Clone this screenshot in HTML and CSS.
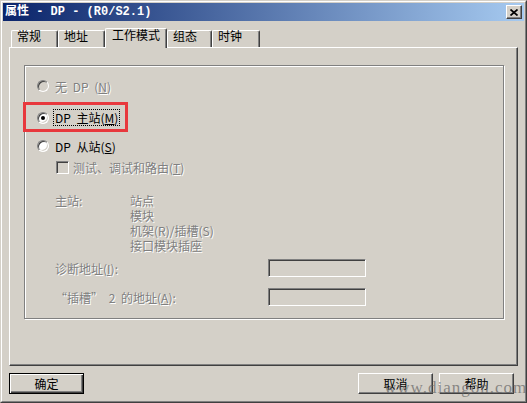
FILE: index.html
```html
<!DOCTYPE html>
<html lang="zh-CN">
<head>
    <meta charset="UTF-8">
    <title>属性 - DP - (R0/S2.1)</title>
    <link rel="stylesheet" href="styles.css">
</head>
<body>

<div class="window">
    <div class="frame">
        <div class="titlebar">
            <span class="title">属性 - DP - (R0/S2.1)</span>
            <span class="close-btn">
                <svg width="8" height="7" viewBox="0 0 8 7"><path d="M0.5 0.5L7.5 6.5M7.5 0.5L0.5 6.5" stroke="#000" stroke-width="1.7" fill="none"/></svg>
            </span>
        </div>

        <div class="content">
            <!-- 选项卡 -->
            <div class="tabs">
                <div class="tab tab-general">常规</div>
                <div class="tab tab-address">地址</div>
                <div class="tab tab-mode active">工作模式</div>
                <div class="tab tab-config">组态</div>
                <div class="tab tab-clock">时钟</div>
            </div>

            <div class="panel">
                <div class="group">
                    <div class="opt">
                        <span class="radio off"></span>
                        <span class="lbl disabled">无 DP (<u>N</u>)</span>
                    </div>
                    <div class="opt opt-master">
                        <span class="radio on"></span>
                        <span class="lbl focus">DP 主站(<u>M</u>)</span>
                        <span class="mark"></span>
                    </div>
                    <div class="opt opt-slave">
                        <span class="radio"></span>
                        <span class="lbl">DP 从站(<u>S</u>)</span>
                    </div>
                    <div class="opt opt-check">
                        <span class="check"></span>
                        <span class="disabled">测试、调试和路由(<u>T</u>)</span>
                    </div>

                    <div class="info disabled">
                        <span>主站:</span>
                        <div>
                            <div>站点</div>
                            <div>模块</div>
                            <div>机架(R)/插槽(S)</div>
                            <div>接口模块插座</div>
                        </div>
                    </div>

                    <div class="field">
                        <span class="field-label disabled">诊断地址(<u>I</u>):</span>
                        <span class="input"></span>
                    </div>
                    <div class="field field-slot">
                        <span class="field-label disabled">“插槽” 2 的地址(<u>A</u>):</span>
                        <span class="input"></span>
                    </div>
                </div>
            </div>

            <div class="buttons">
                <button class="btn default">确定</button>
                <button class="btn cancel">取消</button>
                <button class="btn">帮助</button>
            </div>
        </div>
    </div>
    <div class="watermark">www.diangon.com</div>
</div>

</body>
</html>
```

FILE: styles.css
```css
* {
    box-sizing: border-box;
}
body {
    margin: 0;
    background-color: #d4d0c8;
    font-family: "Liberation Mono", "Noto Sans CJK SC", monospace;
    font-size: 12px;
    color: #000;
}
.window {
    position: relative;
    width: 527px;
    height: 403px;
    border: 1px solid;
    border-color: #d4d0c8 #404040 #404040 #d4d0c8;
    background-color: #d4d0c8;
}
.frame {
    height: 100%;
    border: 1px solid;
    border-color: #fff #808080 #808080 #fff;
    padding: 1px;
    display: flex;
    flex-direction: column;
}
.titlebar {
    height: 18px;
    display: flex;
    align-items: center;
    justify-content: space-between;
    padding: 0 2px;
    background: linear-gradient(to right, #0a246a, #a6caf0);
    color: #fff;
    font-weight: bold;
}
.title {
    line-height: 18px;
}
.close-btn {
    width: 16px;
    height: 14px;
    display: flex;
    align-items: center;
    justify-content: center;
    background-color: #d4d0c8;
    border: 1px solid;
    border-color: #fff #404040 #404040 #fff;
    box-shadow: inset -1px -1px #808080;
}
.content {
    flex: 1;
    padding: 7px 6px 6px 6px;
    display: flex;
    flex-direction: column;
}

/* 选项卡 */
.tabs {
    display: flex;
    align-items: flex-end;
    height: 19px;
    padding-left: 2px;
}
.tab {
    height: 17px;
    line-height: 15px;
    padding-left: 5px;
    border-top: 1px solid #fff;
    border-left: 1px solid #fff;
    border-right: 1px solid #404040;
    box-shadow: inset -1px 0 #808080;
    border-radius: 2px 2px 0 0;
}
.tab-general { width: 47px; }
.tab-address { width: 47px; }
.tab-mode { width: 62px; }
.tab-config { width: 45px; }
.tab-clock { width: 48px; }
.tab.active {
    position: relative;
    z-index: 1;
    height: 20px;
    margin-bottom: -1px;
    line-height: 17px;
    padding-left: 6px;
    background-color: #d4d0c8;
}

.panel {
    height: 319px;
    border: 1px solid;
    border-color: #fff #404040 #404040 #fff;
    box-shadow: inset -1px -1px #808080;
    padding: 17px 13px 0 14px;
}
.group {
    height: 254px;
    border: 1px solid #808080;
    box-shadow: inset 1px 1px #fff, 1px 1px #fff;
    padding: 12px 0 0 12px;
    display: flex;
    flex-direction: column;
    font-family: "Noto Sans CJK SC", sans-serif;
    word-spacing: 3px;
}
.disabled {
    color: #808080;
    text-shadow: 1px 1px 0 #fff;
}
.opt {
    position: relative;
    display: flex;
    align-items: center;
    height: 16px;
}
.opt-master { margin-top: 15px; height: 17px; }
.opt-slave { margin-top: 12px; }
.opt-check { margin-top: 5px; padding-left: 19px; }
.radio {
    position: relative;
    flex-shrink: 0;
    width: 12px;
    height: 12px;
    margin-right: 4px;
    border-radius: 50%;
    border: 1px solid;
    border-color: #808080 #fff #fff #808080;
    box-shadow: inset 1px 1px #404040, inset -1px -1px #d4d0c8;
    background-color: #fff;
}
.radio.off {
    background-color: #d4d0c8;
}
.radio.on::after {
    content: "";
    position: absolute;
    left: 3px;
    top: 3px;
    width: 4px;
    height: 4px;
    border-radius: 50%;
    background-color: #000;
}
.lbl {
    border: 1px dotted transparent;
    padding: 0 1px;
    line-height: 15px;
}
.lbl.focus {
    border-color: #000;
}
.mark {
    position: absolute;
    left: -14px;
    top: -7px;
    width: 105px;
    height: 30px;
    border: 3px solid #e8383d;
}
.check {
    flex-shrink: 0;
    width: 13px;
    height: 13px;
    margin-right: 4px;
    border: 1px solid;
    border-color: #808080 #fff #fff #808080;
    box-shadow: inset 1px 1px #404040, inset -1px -1px #d4d0c8;
    background-color: #d4d0c8;
}
.info {
    display: grid;
    grid-template-columns: 75px auto;
    margin-top: 18px;
    padding-left: 18px;
    line-height: 15px;
}
.field {
    display: flex;
    align-items: center;
    height: 18px;
    margin-top: 6px;
    padding-left: 18px;
}
.field-slot {
    margin-top: 11px;
}
.field-label {
    width: 213px;
}
.input {
    width: 98px;
    height: 18px;
    border: 1px solid;
    border-color: #808080 #fff #fff #808080;
    box-shadow: inset 1px 1px #404040, inset -1px -1px #d4d0c8;
    background-color: #d4d0c8;
}

/* 按钮 */
.buttons {
    display: flex;
    gap: 6px;
    margin-top: 7px;
    padding-right: 4px;
}
.btn {
    width: 75px;
    height: 21px;
    padding: 0;
    font: inherit;
    color: #000;
    background-color: #d4d0c8;
    border: 1px solid;
    border-color: #fff #404040 #404040 #fff;
    box-shadow: inset -1px -1px #808080;
}
.btn.default {
    border: 1px solid #000;
    box-shadow: inset 1px 1px #fff, inset -1px -1px #404040, inset -2px -2px #808080;
}
.btn.cancel {
    margin-left: auto;
}
.watermark {
    position: absolute;
    left: 383px;
    top: 377px;
    font-family: "Liberation Serif", serif;
    font-size: 17px;
    line-height: 20px;
    letter-spacing: 1px;
    color: rgba(100, 100, 100, 0.7);
}
```
